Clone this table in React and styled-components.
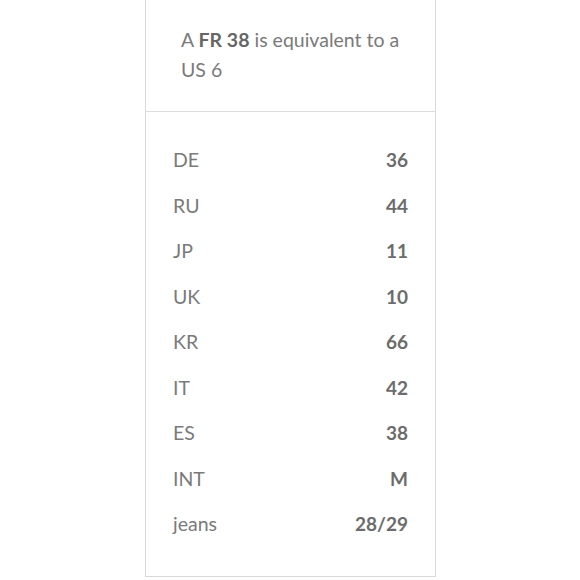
import React from "react";
import styled, { createGlobalStyle } from "styled-components";

const Global = createGlobalStyle`
  html, body { margin: 0; padding: 0; background: #ffffff; }
  body { font-family: Lato, "Noto Sans", sans-serif; }
`;

const Page = styled.div`
  width: 580px;
  height: 580px;
  overflow: hidden;
  display: flex;
  justify-content: flex-start;
  background: #ffffff;
`;

const Card = styled.div`
  margin-left: 145px;
  width: 291px;
  height: 577px;
  box-sizing: border-box;
  border: 1px solid #d9d9d9;
  border-top: none;
  background: #fff;
  display: flex;
  flex-direction: column;
`;

const Header = styled.div`
  padding: 25px 30px 27px 35px;
  border-bottom: 1px solid #dcdcdc;
  font-size: 19.5px;
  line-height: 30px;
  color: #7a7a7a;
  height: 112px;
  box-sizing: border-box;
`;

const Strong = styled.b`
  font-weight: 700;
  color: #666;
`;

const List = styled.div`
  padding: 25px 27px 0 27px;
  display: flex;
  flex-direction: column;
`;

const Row = styled.div`
  display: flex;
  justify-content: space-between;
  align-items: center;
  height: 45.5px;
  font-size: 19.5px;
  line-height: 45.5px;
`;

const Label = styled.span`
  color: #7a7a7a;
`;

const Value = styled.span`
  color: #6c6c6c;
  font-weight: 700;
  font-size: 19px;
`;

const rows = [
  ["DE", "36"],
  ["RU", "44"],
  ["JP", "11"],
  ["UK", "10"],
  ["KR", "66"],
  ["IT", "42"],
  ["ES", "38"],
  ["INT", "M"],
  ["jeans", "28/29"],
];

export default function App() {
  return (
    <Page>
      <Global />
      <Card>
        <Header>
          A <Strong>FR 38</Strong> is equivalent to a US 6
        </Header>
        <List>
          {rows.map(([k, v]) => (
            <Row key={k}>
              <Label>{k}</Label>
              <Value>{v}</Value>
            </Row>
          ))}
        </List>
      </Card>
    </Page>
  );
}
